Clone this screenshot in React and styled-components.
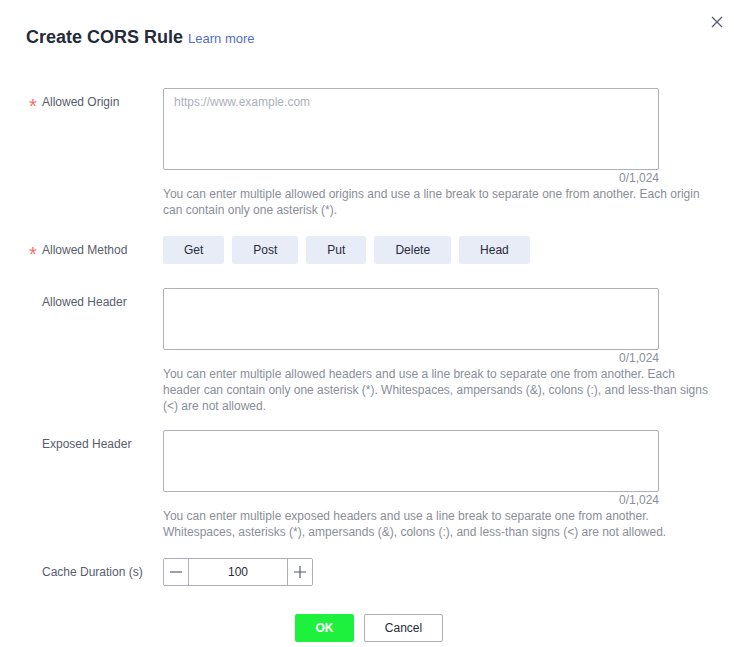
import React from "react";
import styled, { createGlobalStyle } from "styled-components";

const Global = createGlobalStyle`
  html, body { margin: 0; padding: 0; background: #fff; }
  body { font-family: "Liberation Sans", Arial, sans-serif; }
  * { box-sizing: border-box; }
`;

const Dialog = styled.div`
  position: relative;
  width: 734px;
  min-height: 647px;
  padding: 25px 0 0 26px;
  background: #fff;
`;

const Header = styled.div`
  display: flex;
  align-items: baseline;
  gap: 5px;
  height: 24px;
`;

const Title = styled.h2`
  margin: 0;
  font-size: 18px;
  line-height: 24px;
  font-weight: 700;
  color: #252b3a;
`;

const LearnMore = styled.a`
  font-size: 13px;
  color: #526ecc;
  text-decoration: none;
  cursor: pointer;
`;

const Close = styled.button`
  position: absolute;
  top: 14px;
  right: 9px;
  width: 16px;
  height: 16px;
  padding: 0;
  border: none;
  background: none;
  display: flex;
  align-items: center;
  justify-content: center;
  cursor: pointer;
`;

const Form = styled.div`
  margin-top: 39px;
  display: flex;
  flex-direction: column;
`;

const Row = styled.div`
  display: flex;
  margin-bottom: ${(p) => p.$mb ?? 18}px;
`;

const Label = styled.div`
  width: 137px;
  flex: none;
  display: flex;
  font-size: 12px;
  line-height: 28px;
  color: #575d6c;
`;

const Star = styled.span`
  width: 16px;
  padding-left: 3px;
  color: #f66f6a;
  font-size: 20px;
  line-height: 28px;
  transform: translateY(4px);
`;

const Control = styled.div`
  width: 496px;
  display: flex;
  flex-direction: column;
`;

const TextArea = styled.textarea`
  width: 496px;
  height: ${(p) => p.$h}px;
  border: 1px solid #adb0b8;
  border-radius: 2px;
  padding: 5px 10px;
  font-family: inherit;
  font-size: 12px;
  line-height: 16px;
  color: #252b3a;
  resize: none;
  outline: none;
  display: block;
  &::placeholder { color: #adb0b8; }
`;

const Counter = styled.div`
  text-align: right;
  font-size: 12px;
  line-height: 16px;
  color: #8a8e99;
`;

const Help = styled.div`
  font-size: 12px;
  line-height: 16px;
  color: #8a8e99;
  width: 550px;
`;

const Methods = styled.div`
  display: flex;
  gap: 8px;
`;

const MethodBtn = styled.button`
  height: 28px;
  padding: 0 21px;
  border: none;
  border-radius: 2px;
  background: #e8ecf7;
  color: #252b3a;
  font-family: inherit;
  font-size: 12px;
  cursor: pointer;
`;

const Stepper = styled.div`
  display: flex;
  width: 150px;
  height: 28px;
  border: 1px solid #adb0b8;
  border-radius: 2px;
`;

const StepBtn = styled.button`
  width: 25px;
  flex: none;
  border: none;
  background: #fff;
  padding: 0;
  display: flex;
  align-items: center;
  justify-content: center;
  cursor: pointer;
  ${(p) => (p.$side === "left" ? "border-right: 1px solid #adb0b8;" : "border-left: 1px solid #adb0b8;")}
`;

const StepValue = styled.input`
  flex: 1;
  min-width: 0;
  border: none;
  outline: none;
  text-align: center;
  font-family: inherit;
  font-size: 12px;
  color: #252b3a;
`;

const Footer = styled.div`
  display: flex;
  justify-content: center;
  gap: 10px;
  margin: 10px 0 0 -26px;
  padding-left: 4px;
`;

const FooterBtn = styled.button`
  height: 28px;
  width: ${(p) => p.$w}px;
  border-radius: 2px;
  font-family: inherit;
  font-size: 12px;
  cursor: pointer;
  ${(p) =>
    p.$primary
      ? "background: #1ef03e; border: none; color: #fff; font-weight: 700;"
      : "background: #fff; border: 1px solid #adb0b8; color: #252b3a;"}
`;

const FieldLabel = ({ required, children }) => (
  <Label>
    <Star>{required ? "*" : ""}</Star>
    {children}
  </Label>
);

export default function App() {
  return (
    <>
      <Global />
      <Dialog>
        <Header>
          <Title>Create CORS Rule</Title>
          <LearnMore>Learn more</LearnMore>
        </Header>
        <Close aria-label="close">
          <svg width="12" height="12" viewBox="0 0 12 12">
            <path d="M1 1L11 11M11 1L1 11" stroke="#575d6c" strokeWidth="1.3" />
          </svg>
        </Close>
        <Form>
          <Row>
            <FieldLabel required>Allowed Origin</FieldLabel>
            <Control>
              <TextArea $h={82} placeholder="https://www.example.com" />
              <Counter>0/1,024</Counter>
              <Help>
                You can enter multiple allowed origins and use a line break to separate one from another. Each origin can contain only one asterisk (*).
              </Help>
            </Control>
          </Row>
          <Row $mb={24}>
            <FieldLabel required>Allowed Method</FieldLabel>
            <Methods>
              {["Get", "Post", "Put", "Delete", "Head"].map((m) => (
                <MethodBtn key={m}>{m}</MethodBtn>
              ))}
            </Methods>
          </Row>
          <Row $mb={16}>
            <FieldLabel>Allowed Header</FieldLabel>
            <Control>
              <TextArea $h={62} />
              <Counter>0/1,024</Counter>
              <Help>
                You can enter multiple allowed headers and use a line break to separate one from another. Each header can contain only one asterisk (*). Whitespaces, ampersands (&amp;), colons (:), and less-than signs (&lt;) are not allowed.
              </Help>
            </Control>
          </Row>
          <Row>
            <FieldLabel>Exposed Header</FieldLabel>
            <Control>
              <TextArea $h={62} />
              <Counter>0/1,024</Counter>
              <Help>
                You can enter multiple exposed headers and use a line break to separate one from another. Whitespaces, asterisks (*), ampersands (&amp;), colons (:), and less-than signs (&lt;) are not allowed.
              </Help>
            </Control>
          </Row>
          <Row $mb={18}>
            <FieldLabel>Cache Duration (s)</FieldLabel>
            <Stepper>
              <StepBtn $side="left" aria-label="decrease">
                <svg width="12" height="12" viewBox="0 0 12 12">
                  <path d="M0 6H12" stroke="#575d6c" strokeWidth="1.2" />
                </svg>
              </StepBtn>
              <StepValue defaultValue="100" />
              <StepBtn $side="right" aria-label="increase">
                <svg width="12" height="12" viewBox="0 0 12 12">
                  <path d="M0 6H12M6 0V12" stroke="#575d6c" strokeWidth="1.2" />
                </svg>
              </StepBtn>
            </Stepper>
          </Row>
          <Footer>
            <FooterBtn $primary $w={59}>OK</FooterBtn>
            <FooterBtn $w={79}>Cancel</FooterBtn>
          </Footer>
        </Form>
      </Dialog>
    </>
  );
}
